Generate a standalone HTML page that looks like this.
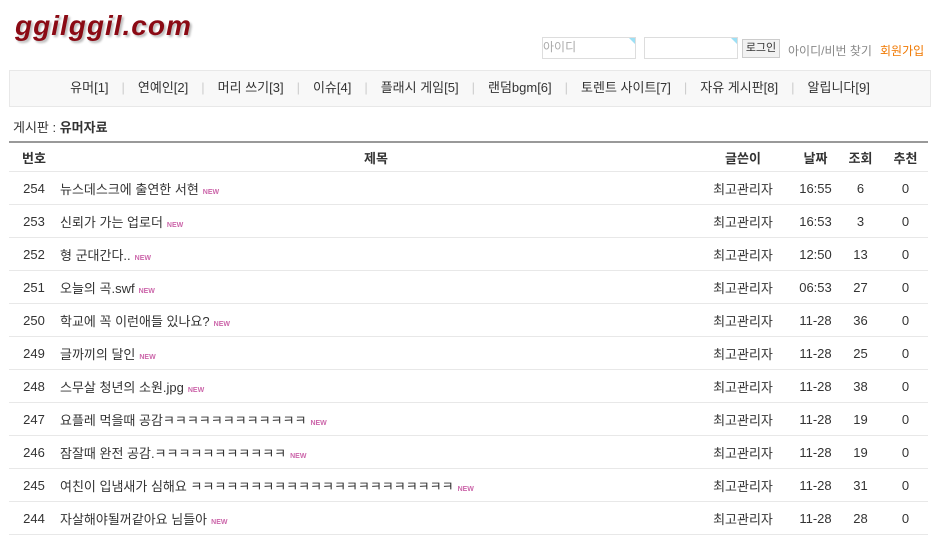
<!DOCTYPE html>
<html><head><meta charset="utf-8"><style>
body{margin:0;background:#fff;font-family:"Liberation Sans","Noto Sans CJK KR","NanumGothic",sans-serif;font-size:13px;color:#333;width:944px;height:535px;overflow:hidden;position:relative}
.a{position:absolute}
.logo{left:15px;top:10px;font-family:"Liberation Sans",sans-serif;font-style:italic;font-weight:bold;font-size:28px;color:#8b0a14;text-shadow:2px 2px 2px #bbb;letter-spacing:1px}
.inp{border:1px solid #ddd;height:20px;background:#fff}
.inp:after{content:"";position:absolute;right:0;top:0;border-top:6px solid #9de0f5;border-left:6px solid transparent}
.nav{left:9px;top:70px;width:920px;height:35px;background:#f8f8f8;border:1px solid #e8e8e8;text-align:center;line-height:34px;font-size:13px;color:#333}
.nav span.s{color:#ccc;margin:0 13px}
table{position:absolute;left:9px;top:141px;width:919px;border-collapse:collapse;border-top:2px solid #999}
td,th{height:32px;border-bottom:1px solid #e8e8e8;text-align:center;font-size:13px;padding:0}
th{font-weight:bold;color:#333;height:28px}
td.t{text-align:left;padding-left:1px}
.n{font-size:7px;color:#c6a;margin-left:4px;font-weight:bold}
</style></head><body>
<div class="a logo">ggilggil.com</div>
<div class="a inp" style="left:542px;top:37px;width:92px;color:#aaa;font-size:12px;line-height:18px">아이디</div>
<div class="a inp" style="left:644px;top:37px;width:92px"></div>
<div class="a" style="left:742px;top:39px;width:36px;height:17px;border:1px solid #ccc;background:#f2f2f2;font-size:11px;text-align:center;line-height:17px">로그인</div>
<div class="a" style="left:788px;top:42px;color:#888;font-size:12px">아이디/비번 찾기</div>
<div class="a" style="left:880px;top:42px;color:#f07800;font-size:12px">회원가입</div>
<div class="a nav">유머[1]<span class="s">|</span>연예인[2]<span class="s">|</span>머리 쓰기[3]<span class="s">|</span>이슈[4]<span class="s">|</span>플래시 게임[5]<span class="s">|</span>랜덤bgm[6]<span class="s">|</span>토렌트 사이트[7]<span class="s">|</span>자유 게시판[8]<span class="s">|</span>알립니다[9]</div>
<div class="a" style="left:13px;top:117px;font-size:13px">게시판 : <b>유머자료</b></div>
<table>
<tr><th style="width:50px">번호</th><th>제목</th><th style="width:100px">글쓴이</th><th style="width:45px">날짜</th><th style="width:45px">조회</th><th style="width:45px">추천</th></tr>
<tr><td>254</td><td class="t">뉴스데스크에 출연한 서현<span class="n">NEW</span></td><td>최고관리자</td><td>16:55</td><td>6</td><td>0</td></tr>
<tr><td>253</td><td class="t">신뢰가 가는 업로더<span class="n">NEW</span></td><td>최고관리자</td><td>16:53</td><td>3</td><td>0</td></tr>
<tr><td>252</td><td class="t">형 군대간다..<span class="n">NEW</span></td><td>최고관리자</td><td>12:50</td><td>13</td><td>0</td></tr>
<tr><td>251</td><td class="t">오늘의 곡.swf<span class="n">NEW</span></td><td>최고관리자</td><td>06:53</td><td>27</td><td>0</td></tr>
<tr><td>250</td><td class="t">학교에 꼭 이런애들 있나요?<span class="n">NEW</span></td><td>최고관리자</td><td>11-28</td><td>36</td><td>0</td></tr>
<tr><td>249</td><td class="t">글까끼의 달인<span class="n">NEW</span></td><td>최고관리자</td><td>11-28</td><td>25</td><td>0</td></tr>
<tr><td>248</td><td class="t">스무살 청년의 소원.jpg<span class="n">NEW</span></td><td>최고관리자</td><td>11-28</td><td>38</td><td>0</td></tr>
<tr><td>247</td><td class="t">요플레 먹을때 공감ㅋㅋㅋㅋㅋㅋㅋㅋㅋㅋㅋㅋ<span class="n">NEW</span></td><td>최고관리자</td><td>11-28</td><td>19</td><td>0</td></tr>
<tr><td>246</td><td class="t">잠잘때 완전 공감.ㅋㅋㅋㅋㅋㅋㅋㅋㅋㅋㅋ<span class="n">NEW</span></td><td>최고관리자</td><td>11-28</td><td>19</td><td>0</td></tr>
<tr><td>245</td><td class="t">여친이 입냄새가 심해요 ㅋㅋㅋㅋㅋㅋㅋㅋㅋㅋㅋㅋㅋㅋㅋㅋㅋㅋㅋㅋㅋㅋ<span class="n">NEW</span></td><td>최고관리자</td><td>11-28</td><td>31</td><td>0</td></tr>
<tr><td>244</td><td class="t">자살해야될꺼같아요 님들아<span class="n">NEW</span></td><td>최고관리자</td><td>11-28</td><td>28</td><td>0</td></tr>
</table>
</body></html>
